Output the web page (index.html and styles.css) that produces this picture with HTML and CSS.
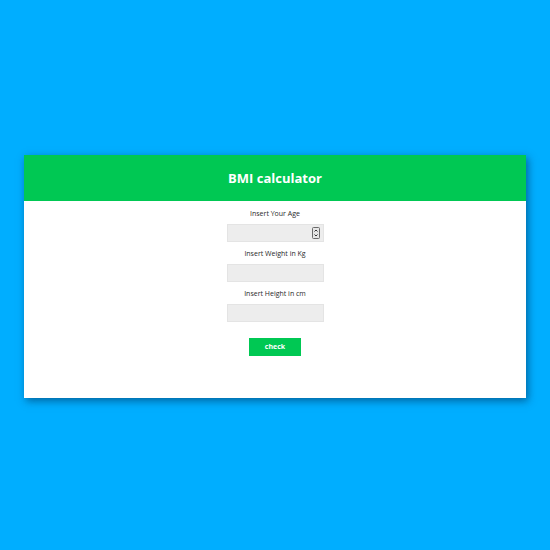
FILE: index.html
```html
<!DOCTYPE html>
<html lang="en">
<head>
<meta charset="utf-8">
<title>BMI calculator</title>
<link rel="stylesheet" href="styles.css">
</head>
<body>
<div class="card">
  <div class="card-header">BMI calculator</div>
  <form class="card-body">
    <div class="field">
      <label class="label">Insert Your Age</label>
      <div class="input-wrap">
        <input class="input" type="text">
        <svg class="spin" width="8" height="12" viewBox="0 0 8 12">
          <rect x="0.5" y="0.5" width="7" height="11" rx="1" fill="#e6e6e6" stroke="#6b6b6b"/>
          <path d="M2.5 4.5 L4 3 L5.5 4.5" fill="none" stroke="#333" stroke-width="1"/>
          <path d="M2.5 7.5 L4 9 L5.5 7.5" fill="none" stroke="#333" stroke-width="1"/>
        </svg>
      </div>
    </div>
    <div class="field">
      <label class="label">Insert Weight in Kg</label>
      <div class="input-wrap"><input class="input" type="text"></div>
    </div>
    <div class="field">
      <label class="label">Insert Height in cm</label>
      <div class="input-wrap"><input class="input" type="text"></div>
    </div>
    <button class="btn" type="button">check</button>
  </form>
</div>
</body>
</html>
```
FILE: styles.css
```css
html, body {
  margin: 0;
  padding: 0;
}
body {
  background: #00aeff;
  min-height: 550px;
  display: flex;
  align-items: center;
  justify-content: center;
  font-family: "Open Sans", "Noto Sans", sans-serif;
}
.card {
  width: 502px;
  background: #ffffff;
  box-shadow: 2px 3px 8px rgba(0, 40, 80, 0.55);
  margin-top: 2px;
}
.card-header {
  background: #00c853;
  color: #ffffff;
  font-weight: 700;
  font-size: 13px;
  height: 46px;
  display: flex;
  align-items: center;
  justify-content: center;
}
.card-body {
  display: flex;
  flex-direction: column;
  align-items: center;
  padding: 7px 0 42px;
  margin: 0;
}
.field {
  display: flex;
  flex-direction: column;
  align-items: center;
  margin-bottom: 6px;
}
.label {
  display: block;
  font-size: 7px;
  line-height: 12px;
  height: 12px;
  color: #2a2a2a;
  margin-bottom: 4px;
}
.input-wrap {
  position: relative;
  width: 97px;
  height: 18px;
}
.input {
  display: block;
  box-sizing: border-box;
  width: 97px;
  height: 18px;
  margin: 0;
  border: 1px solid #e4e4e4;
  background: #ededed;
  outline: none;
  padding: 0 4px;
}
.spin {
  position: absolute;
  right: 4px;
  top: 3px;
}
.btn {
  display: block;
  margin-top: 10px;
  width: 52px;
  height: 18px;
  border: none;
  background: #00c853;
  color: #ffffff;
  font-family: "Open Sans", "Noto Sans", sans-serif;
  font-size: 7px;
  font-weight: 700;
  padding: 0;
}
```
